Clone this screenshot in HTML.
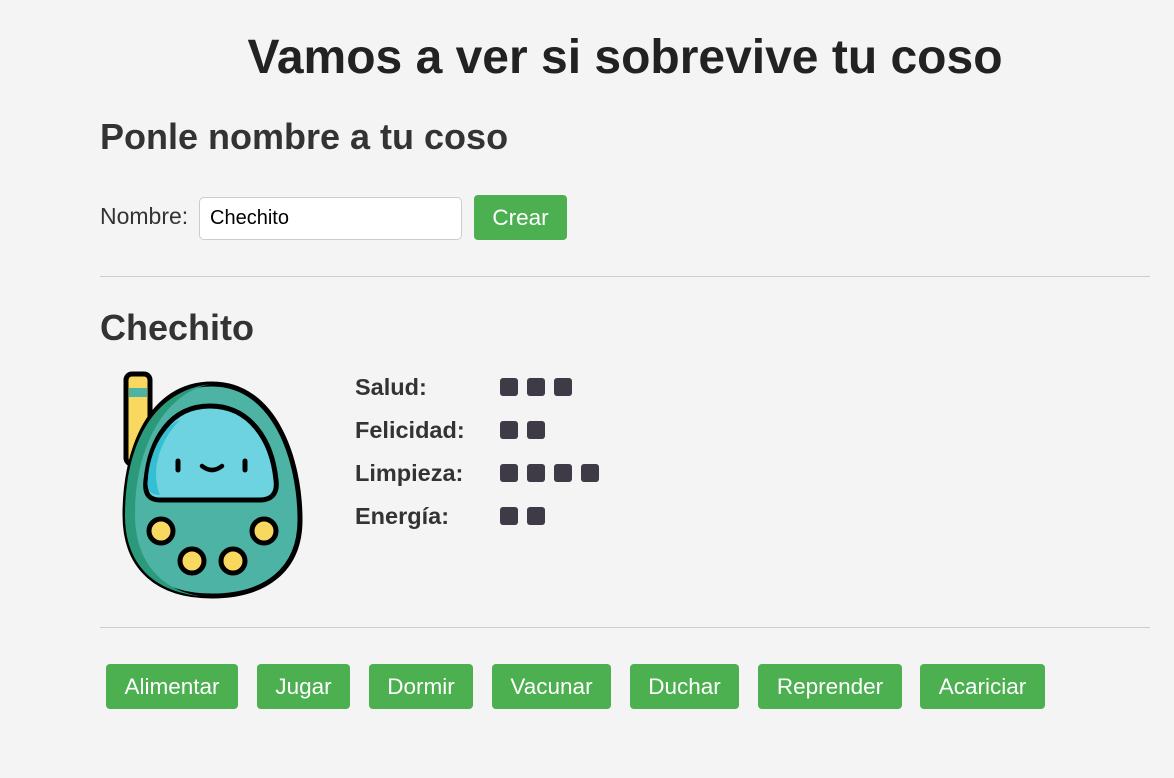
<!DOCTYPE html>
<html><head><meta charset="utf-8"><style>
body{margin:0;background:#f4f4f4;font-family:"Liberation Sans",Arial,sans-serif;color:#333;width:1174px;height:778px;position:relative;overflow:hidden}
.a{position:absolute;white-space:nowrap}
h1,h2{margin:0;font-weight:bold}
.btn{position:absolute;background:#4caf50;color:#fff;border-radius:4px;font-size:22.5px;height:45px;line-height:45px;text-align:center}
.hr{position:absolute;left:100px;width:1050px;height:1px;background:#ccc}
.lbl{position:absolute;left:355px;font-size:23.5px;font-weight:bold;color:#333}
.sq{position:absolute;width:18px;height:18px;background:#3f3b46;border-radius:3px}
</style></head><body>
<h1 class="a" style="left:0;width:1250px;text-align:center;top:30px;font-size:48px;color:#222">Vamos a ver si sobrevive tu coso</h1>
<h2 class="a" style="left:100px;top:116px;font-size:36px">Ponle nombre a tu coso</h2>
<div class="a" style="left:100px;top:203px;font-size:23px">Nombre:</div>
<div class="a" style="left:199px;top:197px;background:#fff;border:1px solid #ccc;border-radius:5px;box-sizing:border-box;width:263px;height:43px;font-size:20px;line-height:41px;padding-left:10px;color:#000">Chechito</div>
<div class="btn" style="left:474px;top:195px;width:93px">Crear</div>
<div class="hr" style="top:276px"></div>
<h2 class="a" style="left:100px;top:307px;font-size:36px">Chechito</h2>
<svg class="a" style="left:120px;top:368px" width="190" height="235" viewBox="120 368 190 235">
<rect x="126" y="374" width="24" height="90" rx="6" fill="#f9d85f" stroke="#000" stroke-width="5"/>
<rect x="129" y="388" width="18" height="9" fill="#4db3a5"/>
<path d="M212 384 C275 384 300 460 300 520 C300 570 265 596 212 596 C160 596 125 570 125 515 C125 450 150 384 212 384Z" fill="#4db3a5" stroke="#000" stroke-width="5"/>
<path d="M212 384 C170 390 135 440 135 515 C135 560 160 590 200 596 C160 592 125 570 125 515 C125 450 150 390 212 384Z" fill="#2a9a7a"/>
<path d="M210 406 C250 406 272 440 276 480 C278 495 270 500 260 500 H160 C150 500 144 495 146 480 C150 440 170 406 210 406Z" fill="#6dd3e0" stroke="#000" stroke-width="5"/>
<path d="M180 420 C160 440 150 470 160 495 C150 495 146 490 148 478 C150 450 165 425 180 420Z" fill="#35bfd3"/>
<line x1="178" y1="461" x2="178" y2="470" stroke="#000" stroke-width="5" stroke-linecap="round"/>
<line x1="245" y1="461" x2="245" y2="470" stroke="#000" stroke-width="5" stroke-linecap="round"/>
<path d="M202 466 Q212 474 222 466" fill="none" stroke="#000" stroke-width="4.5" stroke-linecap="round"/>
<g fill="#f9d85f" stroke="#000" stroke-width="5"><circle cx="161" cy="531" r="12"/><circle cx="264" cy="531" r="12"/><circle cx="192" cy="561" r="12"/><circle cx="233" cy="561" r="12"/></g>
</svg>
<div class="lbl" style="top:374px">Salud:</div>
<div class="lbl" style="top:417px">Felicidad:</div>
<div class="lbl" style="top:460px">Limpieza:</div>
<div class="lbl" style="top:503px">Energía:</div>
<div class="sq" style="left:500px;top:378px"></div><div class="sq" style="left:527px;top:378px"></div><div class="sq" style="left:554px;top:378px"></div>
<div class="sq" style="left:500px;top:421px"></div><div class="sq" style="left:527px;top:421px"></div>
<div class="sq" style="left:500px;top:464px"></div><div class="sq" style="left:527px;top:464px"></div><div class="sq" style="left:554px;top:464px"></div><div class="sq" style="left:581px;top:464px"></div>
<div class="sq" style="left:500px;top:507px"></div><div class="sq" style="left:527px;top:507px"></div>
<div class="hr" style="top:627px"></div>
<div class="btn" style="left:106px;top:664px;width:132px">Alimentar</div>
<div class="btn" style="left:257px;top:664px;width:93px">Jugar</div>
<div class="btn" style="left:369px;top:664px;width:104px">Dormir</div>
<div class="btn" style="left:492px;top:664px;width:119px">Vacunar</div>
<div class="btn" style="left:630px;top:664px;width:109px">Duchar</div>
<div class="btn" style="left:758px;top:664px;width:144px">Reprender</div>
<div class="btn" style="left:920px;top:664px;width:125px">Acariciar</div>
</body></html>
